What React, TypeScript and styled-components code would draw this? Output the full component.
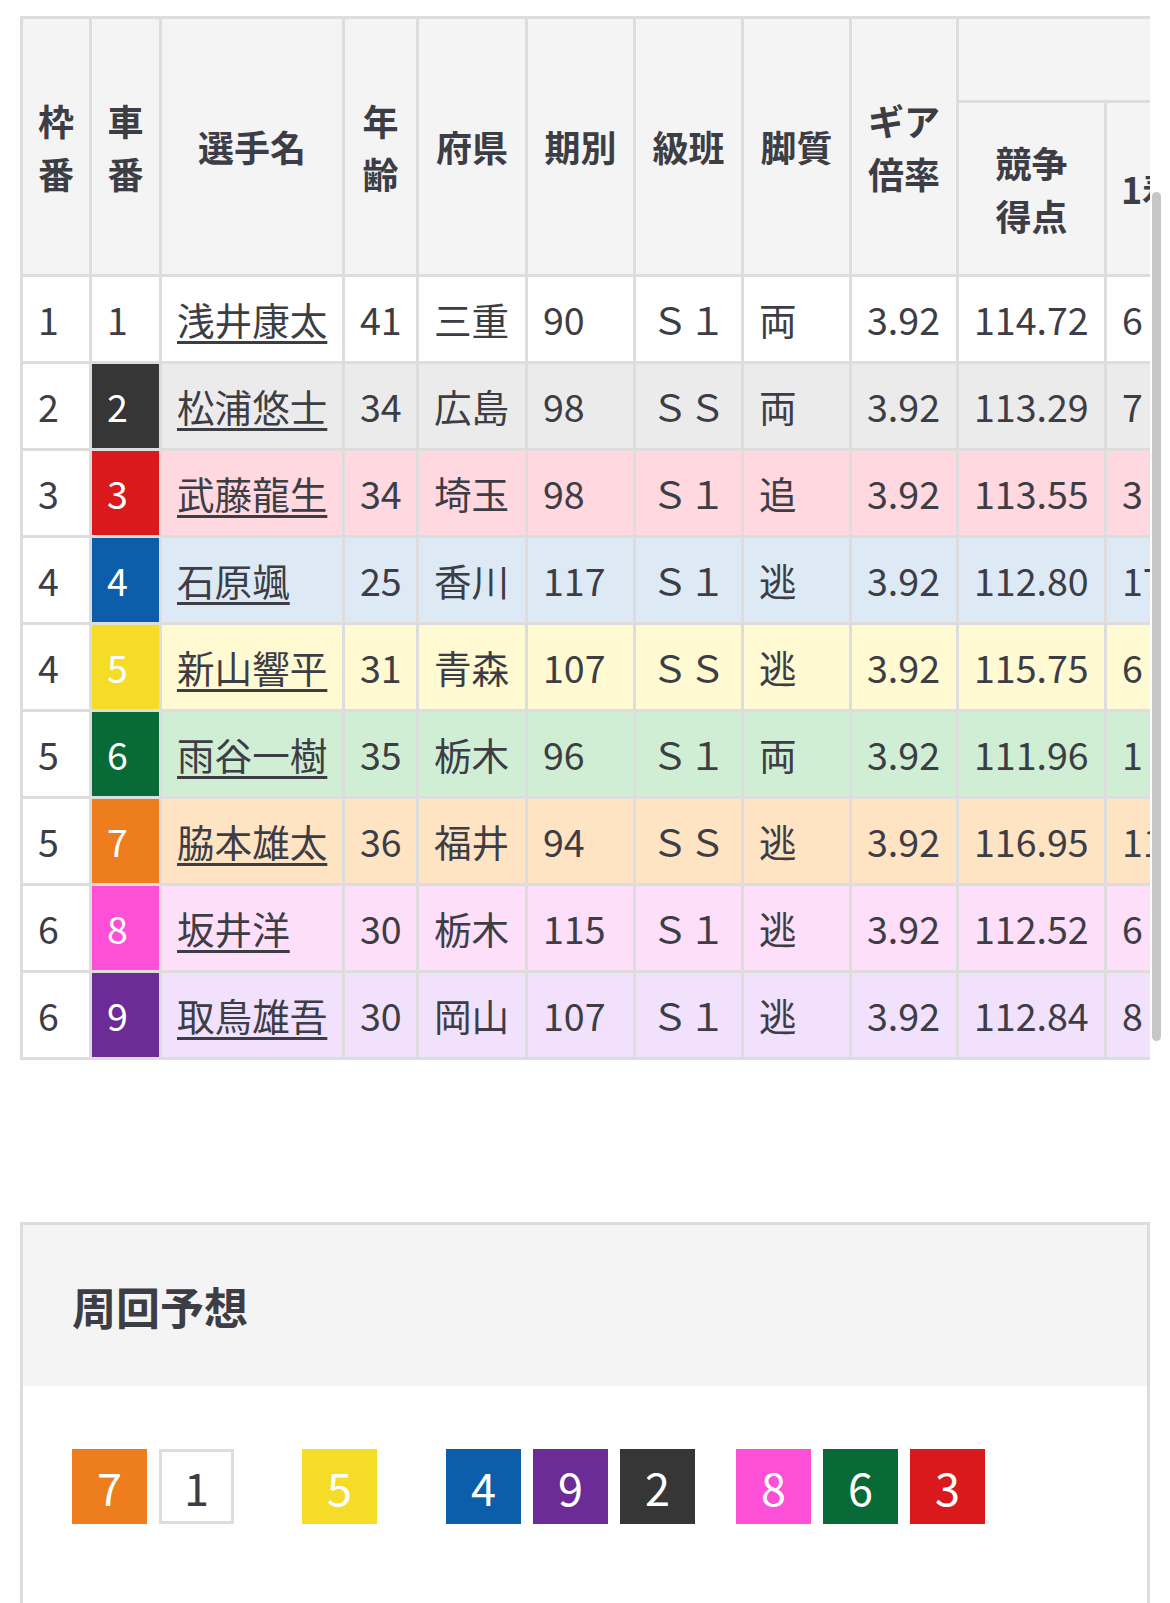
import React from 'react';
import styled, { createGlobalStyle } from 'styled-components';

const GlobalStyle = createGlobalStyle`
  body {
    margin: 0;
    background: #ffffff;
    font-family: "Noto Sans CJK JP", "Noto Sans", sans-serif;
    color: #3d3d45;
  }
`;

const carColors: Record<number, string> = {
  1: '#ffffff',
  2: '#363636',
  3: '#d9191c',
  4: '#0c5eab',
  5: '#f5dc26',
  6: '#086b37',
  7: '#ee7d1d',
  8: '#fe50d6',
  9: '#6b2c97',
};

const rowColors: Record<number, string> = {
  1: '#ffffff',
  2: '#ebebeb',
  3: '#ffd8e0',
  4: '#ddeaf6',
  5: '#fffad2',
  6: '#d0eed3',
  7: '#ffe4c4',
  8: '#fddffa',
  9: '#f1e1fc',
};

type Racer = {
  waku: number;
  car: number;
  name: string;
  age: number;
  pref: string;
  term: number;
  rank: string;
  leg: string;
  gear: string;
  score: string;
  results: string[];
};

const racers: Racer[] = [
  { waku: 1, car: 1, name: '浅井康太', age: 41, pref: '三重', term: 90, rank: 'Ｓ１', leg: '両', gear: '3.92', score: '114.72', results: ['6', '4', '3', '10'] },
  { waku: 2, car: 2, name: '松浦悠士', age: 34, pref: '広島', term: 98, rank: 'ＳＳ', leg: '両', gear: '3.92', score: '113.29', results: ['7', '5', '4', '6'] },
  { waku: 3, car: 3, name: '武藤龍生', age: 34, pref: '埼玉', term: 98, rank: 'Ｓ１', leg: '追', gear: '3.92', score: '113.55', results: ['3', '6', '5', '9'] },
  { waku: 4, car: 4, name: '石原颯', age: 25, pref: '香川', term: 117, rank: 'Ｓ１', leg: '逃', gear: '3.92', score: '112.80', results: ['17', '3', '2', '5'] },
  { waku: 4, car: 5, name: '新山響平', age: 31, pref: '青森', term: 107, rank: 'ＳＳ', leg: '逃', gear: '3.92', score: '115.75', results: ['6', '8', '3', '7'] },
  { waku: 5, car: 6, name: '雨谷一樹', age: 35, pref: '栃木', term: 96, rank: 'Ｓ１', leg: '両', gear: '3.92', score: '111.96', results: ['1', '4', '6', '12'] },
  { waku: 5, car: 7, name: '脇本雄太', age: 36, pref: '福井', term: 94, rank: 'ＳＳ', leg: '逃', gear: '3.92', score: '116.95', results: ['11', '2', '1', '4'] },
  { waku: 6, car: 8, name: '坂井洋', age: 30, pref: '栃木', term: 115, rank: 'Ｓ１', leg: '逃', gear: '3.92', score: '112.52', results: ['6', '5', '4', '8'] },
  { waku: 6, car: 9, name: '取鳥雄吾', age: 30, pref: '岡山', term: 107, rank: 'Ｓ１', leg: '逃', gear: '3.92', score: '112.84', results: ['8', '3', '5', '6'] },
];

// column widths incl. right border; first 10 are what the screen shows
const colWidths = [69, 70, 183, 74, 109, 108, 108, 108, 107, 148, 88, 88, 88, 100];
const tableWidth = colWidths.reduce((a, b) => a + b, 3);

const forecast: { cars: number[]; space: number }[] = [
  { cars: [7, 1], space: 0 },
  { cars: [5], space: 68 },
  { cars: [4, 9, 2], space: 69 },
  { cars: [8, 6, 3], space: 41 },
];

const Page = styled.div`
  position: relative;
  padding: 16px 20px 0;
`;

const TableScroll = styled.div`
  overflow: hidden;
`;

const Table = styled.table<{ $width: number }>`
  width: ${(p) => p.$width}px;
  table-layout: fixed;
  border-collapse: separate;
  border-spacing: 0;
  border-top: 3px solid #dddddd;
  border-left: 3px solid #dddddd;
`;

const Col = styled.col<{ $w: number }>`
  width: ${(p) => p.$w}px;
`;

const HeadRow = styled.tr<{ $h: number }>`
  height: ${(p) => p.$h}px;
`;

const Th = styled.th`
  background: #f4f4f4;
  border-right: 3px solid #dddddd;
  border-bottom: 3px solid #dddddd;
  padding: 0 12px;
  font-size: 36px;
  font-weight: 700;
  line-height: 53px;
  text-align: center;
  vertical-align: middle;
  white-space: nowrap;
  overflow: hidden;
`;

const BodyRow = styled.tr`
  height: 87px;
`;

const Td = styled.td<{ $bg: string }>`
  background: ${(p) => p.$bg};
  border-right: 3px solid #dddddd;
  border-bottom: 3px solid #dddddd;
  padding: 0 15px;
  font-size: 37.6px;
  line-height: 50px;
  text-align: left;
  vertical-align: middle;
  white-space: nowrap;
  overflow: hidden;
`;

const CarTd = styled(Td)<{ $car: number }>`
  color: ${(p) => (p.$car === 1 ? '#3d3d45' : '#ffffff')};
`;

const NameLink = styled.a`
  color: inherit;
  text-decoration: underline;
  text-decoration-thickness: 3px;
  text-underline-offset: 6px;
`;

const ScrollThumb = styled.div`
  position: absolute;
  left: 1152px;
  top: 192px;
  width: 9px;
  height: 849px;
  border-radius: 5px;
  background: #c6c6c6;
`;

const ForecastBox = styled.section`
  margin-top: 162px;
  border: 3px solid #dddddd;
  border-bottom: none;
`;

const ForecastHead = styled.h2`
  margin: 0;
  height: 161px;
  display: flex;
  align-items: center;
  padding: 0 49px;
  background: #f4f4f4;
  font-size: 44px;
  font-weight: 700;
`;

const ForecastBody = styled.div`
  display: flex;
  align-items: center;
  padding: 63px 49px 120px;
`;

const ChipGroup = styled.div<{ $space: number }>`
  display: flex;
  gap: 12px;
  margin-left: ${(p) => p.$space}px;
`;

const Chip = styled.span<{ $car: number }>`
  box-sizing: border-box;
  width: 75px;
  height: 75px;
  display: flex;
  align-items: center;
  justify-content: center;
  background: ${(p) => carColors[p.$car]};
  color: ${(p) => (p.$car === 1 ? '#3d3d45' : '#ffffff')};
  border: ${(p) => (p.$car === 1 ? '3px solid #dddddd' : 'none')};
  font-size: 45px;
`;

const App: React.FC = () => {
  return (
    <Page>
      <GlobalStyle />
      <TableScroll>
        <Table $width={tableWidth}>
          <colgroup>
            {colWidths.map((w, i) => (
              <Col key={i} $w={w} />
            ))}
          </colgroup>
          <thead>
            <HeadRow $h={84}>
              <Th rowSpan={2}>
                枠<br />番
              </Th>
              <Th rowSpan={2}>
                車<br />番
              </Th>
              <Th rowSpan={2}>選手名</Th>
              <Th rowSpan={2}>
                年<br />齢
              </Th>
              <Th rowSpan={2}>府県</Th>
              <Th rowSpan={2}>期別</Th>
              <Th rowSpan={2}>級班</Th>
              <Th rowSpan={2}>脚質</Th>
              <Th rowSpan={2}>
                ギア
                <br />
                倍率
              </Th>
              <Th colSpan={5}>　　　　　　　　　直近成績</Th>
            </HeadRow>
            <HeadRow $h={174}>
              <Th>
                競争
                <br />
                得点
              </Th>
              <Th>1着</Th>
              <Th>2着</Th>
              <Th>3着</Th>
              <Th>着外</Th>
            </HeadRow>
          </thead>
          <tbody>
            {racers.map((r) => {
              const bg = rowColors[r.car];
              return (
                <BodyRow key={r.car}>
                  <Td $bg="#ffffff">{r.waku}</Td>
                  <CarTd $bg={carColors[r.car]} $car={r.car}>
                    {r.car}
                  </CarTd>
                  <Td $bg={bg}>
                    <NameLink href="#">{r.name}</NameLink>
                  </Td>
                  <Td $bg={bg}>{r.age}</Td>
                  <Td $bg={bg}>{r.pref}</Td>
                  <Td $bg={bg}>{r.term}</Td>
                  <Td $bg={bg}>{r.rank}</Td>
                  <Td $bg={bg}>{r.leg}</Td>
                  <Td $bg={bg}>{r.gear}</Td>
                  <Td $bg={bg}>{r.score}</Td>
                  {r.results.map((v, i) => (
                    <Td key={i} $bg={bg}>
                      {v}
                    </Td>
                  ))}
                </BodyRow>
              );
            })}
          </tbody>
        </Table>
      </TableScroll>
      <ScrollThumb />

      <ForecastBox>
        <ForecastHead>周回予想</ForecastHead>
        <ForecastBody>
          {forecast.map((g, i) => (
            <ChipGroup key={i} $space={g.space}>
              {g.cars.map((c) => (
                <Chip key={c} $car={c}>
                  {c}
                </Chip>
              ))}
            </ChipGroup>
          ))}
        </ForecastBody>
      </ForecastBox>
    </Page>
  );
};

export default App;
